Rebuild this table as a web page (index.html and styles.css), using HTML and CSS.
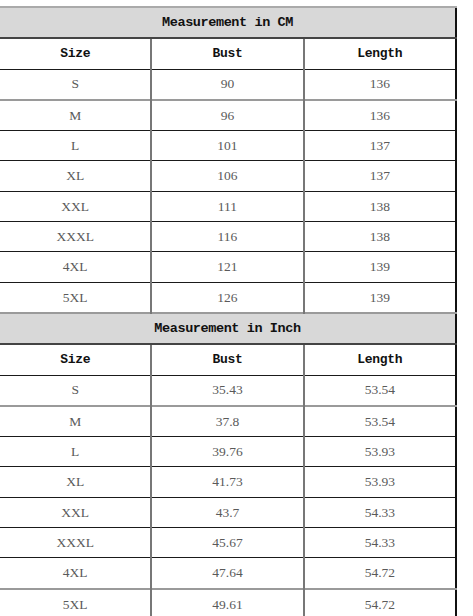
FILE: index.html
```html
<!DOCTYPE html>
<html>
<head>
<meta charset="utf-8">
<link rel="stylesheet" href="styles.css">
</head>
<body>
<table class="chart">
  <tbody>
    <tr class="title"><td colspan="3">Measurement in CM</td></tr>
    <tr class="head"><td>Size</td><td>Bust</td><td>Length</td></tr>
    <tr><td>S</td><td>90</td><td>136</td></tr>
    <tr class="soft"><td>M</td><td>96</td><td>136</td></tr>
    <tr><td>L</td><td>101</td><td>137</td></tr>
    <tr><td>XL</td><td>106</td><td>137</td></tr>
    <tr><td>XXL</td><td>111</td><td>138</td></tr>
    <tr><td>XXXL</td><td>116</td><td>138</td></tr>
    <tr><td>4XL</td><td>121</td><td>139</td></tr>
    <tr><td>5XL</td><td>126</td><td>139</td></tr>
    <tr class="title soft"><td colspan="3">Measurement in Inch</td></tr>
    <tr class="head"><td>Size</td><td>Bust</td><td>Length</td></tr>
    <tr><td>S</td><td>35.43</td><td>53.54</td></tr>
    <tr class="soft"><td>M</td><td>37.8</td><td>53.54</td></tr>
    <tr><td>L</td><td>39.76</td><td>53.93</td></tr>
    <tr><td>XL</td><td>41.73</td><td>53.93</td></tr>
    <tr><td>XXL</td><td>43.7</td><td>54.33</td></tr>
    <tr><td>XXXL</td><td>45.67</td><td>54.33</td></tr>
    <tr><td>4XL</td><td>47.64</td><td>54.72</td></tr>
    <tr class="soft"><td>5XL</td><td>49.61</td><td>54.72</td></tr>
  </tbody>
</table>
</body>
</html>
```
FILE: styles.css
```css
html, body {
  margin: 0;
  padding: 0;
  background: #ffffff;
}

.chart {
  margin: 6px 0 0 -2px;
  width: 459px;
  border-collapse: collapse;
  table-layout: fixed;
  border-right: 2px solid #111;
}

.chart td {
  height: 29.3px;
  padding: 0;
  text-align: center;
  vertical-align: middle;
  border-top: 1px solid #1a1a1a;
  border-left: 2px solid #777;
  font-family: "Liberation Serif", "DejaVu Serif", serif;
  font-size: 13.5px;
  color: #5a5a5a;
  line-height: 1;
}

.chart tr.soft td {
  border-top: 2px solid #9a9a9a;
}

.chart tr.title td {
  background: #d8d8d8;
  font-family: "Liberation Mono", "DejaVu Sans Mono", monospace;
  font-weight: bold;
  font-size: 13.5px;
  letter-spacing: -0.4px;
  color: #111;
  border-bottom: 2px solid #444;
}

.chart tr.title:first-child td {
  border-top: 2px solid #aaa;
}

.chart tr.head td {
  font-family: "Liberation Mono", "DejaVu Sans Mono", monospace;
  font-weight: bold;
  font-size: 13px;
  letter-spacing: -0.3px;
  color: #111;
}
```
